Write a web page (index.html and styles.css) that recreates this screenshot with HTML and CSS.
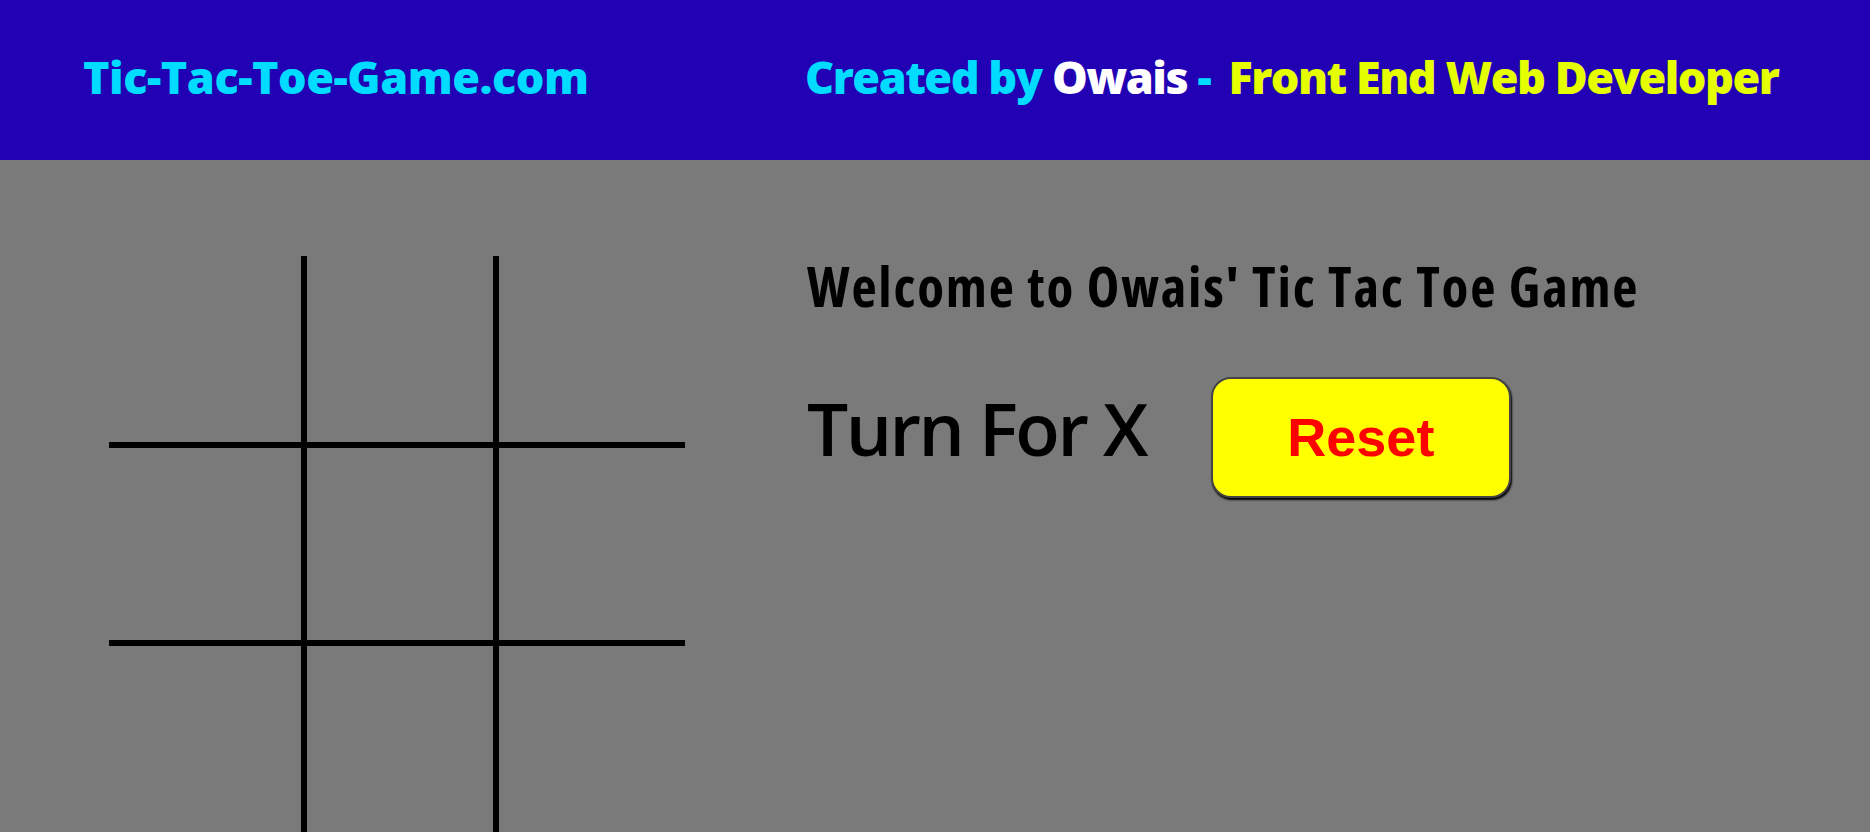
FILE: index.html
```html
<!DOCTYPE html>
<html lang="en">
<head>
<meta charset="UTF-8">
<title>Tic Tac Toe Game</title>
<link rel="stylesheet" href="styles.css">
</head>
<body>
<nav class="navbar">
  <div class="brand">Tic-Tac-Toe-Game.com</div>
  <div class="credit"><span class="cyan">Created by</span> <span class="white">Owais</span> <span class="cyan dash">-</span> <span class="lime">Front End Web Developer</span></div>
</nav>
<main class="game">
  <div class="board">
    <div class="box"></div>
    <div class="box"></div>
    <div class="box"></div>
    <div class="box"></div>
    <div class="box"></div>
    <div class="box"></div>
    <div class="box"></div>
    <div class="box"></div>
    <div class="box"></div>
  </div>
  <section class="info">
    <h1 class="welcome">Welcome to Owais' Tic Tac Toe Game</h1>
    <div class="controls">
      <span class="turn">Turn For X</span>
      <button class="reset">Reset</button>
    </div>
  </section>
</main>
</body>
</html>
```
FILE: styles.css
```css
html, body {
  margin: 0;
  padding: 0;
}
body {
  background: #7a7a7a;
  overflow: hidden;
  height: 832px;
}
.navbar {
  height: 160px;
  background: #2200b4;
  display: flex;
  align-items: center;
  padding: 0 0 8px 83px;
  box-sizing: border-box;
  font-family: "Open Sans", sans-serif;
  font-weight: 800;
  font-stretch: 92%;
  font-size: 45px;
}
.brand {
  width: 722px;
  color: #00dcff;
  letter-spacing: -0.5px;
}
.credit {
  white-space: pre;
  letter-spacing: -1.5px;
}
.cyan { color: #00dcff; }
.white { color: #ffffff; }
.lime { color: #e6ff00; }
.dash { margin-right: 8px; }

.game {
  display: flex;
  align-items: flex-start;
  padding: 96px 0 0 109px;
}
.board {
  display: grid;
  grid-template-columns: 192px 186px 186px;
  grid-template-rows: 186px 192px 186px;
  gap: 6px;
  background: #000;
  flex-shrink: 0;
}
.box {
  background: #7a7a7a;
}
.info {
  margin-left: 122px;
  display: flex;
  flex-direction: column;
}
.welcome {
  margin: 0;
  font-family: "Open Sans", sans-serif;
  font-stretch: 75%;
  font-weight: 700;
  font-size: 55px;
  letter-spacing: 1.8px;
  color: #000;
  line-height: 1.1;
}
.controls {
  display: flex;
  align-items: baseline;
  gap: 65px;
  margin-top: 60px;
}
.turn {
  font-family: "Open Sans", sans-serif;
  font-size: 73px;
  font-weight: 600;
  letter-spacing: -2.5px;
  color: #000;
}
.reset {
  width: 300px;
  height: 121px;
  padding: 0;
  background: #ffff00;
  color: #ff0000;
  border: 2px solid #444;
  border-radius: 20px;
  box-shadow: 1px 2px 2px #000;
  font-family: "Liberation Sans", Arial, sans-serif;
  font-weight: 700;
  font-size: 54px;
  cursor: pointer;
}
```
